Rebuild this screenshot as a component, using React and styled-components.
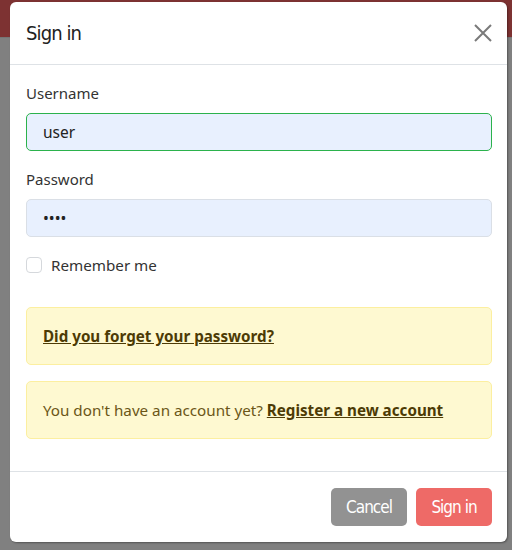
import React from "react";
import styled, { createGlobalStyle } from "styled-components";

const Global = createGlobalStyle`
  html, body { margin: 0; padding: 0; }
  body {
    width: 512px;
    height: 550px;
    overflow: hidden;
    font-family: "Noto Sans", "DejaVu Sans", sans-serif;
    background: #808080;
  }
  * { box-sizing: border-box; }
`;

const Page = styled.div`
  position: relative;
  width: 512px;
  height: 550px;
  background: #808080;
`;

const NavBand = styled.div`
  height: 38px;
  background: #7d3232;
  border-bottom: 1px solid #767676;
`;

const Modal = styled.div`
  position: absolute;
  top: 2px;
  left: 10px;
  width: 497px;
  background: #fff;
  border-radius: 6px;
  box-shadow: 1px 1px 2px rgba(0, 0, 0, 0.35);
  display: flex;
  flex-direction: column;
`;

const Header = styled.div`
  display: flex;
  align-items: center;
  justify-content: space-between;
  padding: 16px 15px 16px 16px;
  border-bottom: 1px solid #dee2e6;
`;

const condensed = `
  font-family: "DejaVu Sans", sans-serif;
  font-stretch: condensed;
`;

const Title = styled.h5`
  margin: 0;
  ${condensed}
  font-weight: 400;
  font-size: 20px;
  letter-spacing: -0.9px;
  line-height: 30px;
  color: #222;
`;

const CloseButton = styled.button`
  border: 0;
  background: none;
  padding: 0;
  width: 18px;
  height: 18px;
  display: flex;
  cursor: pointer;
`;

const Body = styled.div`
  padding: 16px 15px 0 16px;
  display: flex;
  flex-direction: column;
`;

const Label = styled.label`
  font-size: 15px;
  line-height: 24px;
  color: #333;
  margin-bottom: 8px;
`;

const Input = styled.input`
  height: 38px;
  width: 100%;
  border-radius: 5px;
  border: 1px solid ${(p) => (p.$valid ? "#2bb24c" : "#dadfe6")};
  background: #e8f0fe;
  padding: 0 16px;
  font-family: inherit;
  font-size: 15.5px;
  color: #222;
  margin-bottom: 16px;
  outline: none;
`;

const CheckRow = styled.div`
  display: flex;
  align-items: center;
  gap: 9px;
  height: 24px;
  margin-bottom: 30px;
`;

const Box = styled.span`
  width: 16px;
  height: 16px;
  border: 1px solid #d5d8dc;
  border-radius: 4px;
  background: #fff;
`;

const CheckText = styled.span`
  font-size: 15.2px;
  color: #333;
`;

const Alert = styled.div`
  border: 1px solid #fcefa0;
  background: #fef9d1;
  border-radius: 5px;
  padding: 16px;
  font-size: 15.2px;
  line-height: 24px;
  color: #6b5617;
  margin-bottom: 16px;
`;

const AlertLink = styled.a`
  font-weight: 700;
  color: #4d3b05;
  text-decoration: underline;
`;

const Footer = styled.div`
  border-top: 1px solid #dee2e6;
  margin-top: 16px;
  padding: 16px 15px 16px 16px;
  display: flex;
  justify-content: flex-end;
  gap: 9px;
`;

const Button = styled.button`
  height: 38px;
  width: 76px;
  border: 0;
  border-radius: 5px;
  background: ${(p) => (p.$primary ? "#ee6a67" : "#929292")};
  color: #fff;
  ${condensed}
  font-size: 17px;
  letter-spacing: -1px;
  cursor: pointer;
`;

export default function App() {
  return (
    <Page>
      <Global />
      <NavBand />
      <Modal>
        <Header>
          <Title>Sign in</Title>
          <CloseButton aria-label="Close">
            <svg width="18" height="18" viewBox="0 0 18 18">
              <path d="M1 1L17 17M17 1L1 17" stroke="#7a7a7a" strokeWidth="2" />
            </svg>
          </CloseButton>
        </Header>
        <Body>
          <Label>Username</Label>
          <Input $valid defaultValue="user" />
          <Label>Password</Label>
          <Input type="password" defaultValue="pass" />
          <CheckRow>
            <Box />
            <CheckText>Remember me</CheckText>
          </CheckRow>
          <Alert>
            <AlertLink href="#">Did you forget your password?</AlertLink>
          </Alert>
          <Alert>
            You don't have an account yet?{" "}
            <AlertLink href="#">Register a new account</AlertLink>
          </Alert>
        </Body>
        <Footer>
          <Button>Cancel</Button>
          <Button $primary>Sign in</Button>
        </Footer>
      </Modal>
    </Page>
  );
}
